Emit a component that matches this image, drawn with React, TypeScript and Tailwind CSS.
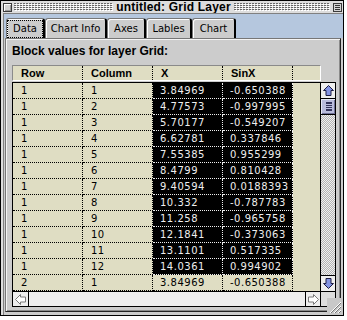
import React from "react";

const ROWS: [string, string, string, string][] = [
  ["1", "1", "3.84969", "-0.650388"],
  ["1", "2", "4.77573", "-0.997995"],
  ["1", "3", "5.70177", "-0.549207"],
  ["1", "4", "6.62781", "0.337846"],
  ["1", "5", "7.55385", "0.955299"],
  ["1", "6", "8.4799", "0.810428"],
  ["1", "7", "9.40594", "0.0188393"],
  ["1", "8", "10.332", "-0.787783"],
  ["1", "9", "11.258", "-0.965758"],
  ["1", "10", "12.1841", "-0.373063"],
  ["1", "11", "13.1101", "0.517335"],
  ["1", "12", "14.0361", "0.994902"],
  ["2", "1", "3.84969", "-0.650388"],
];

const TABS = [
  { label: "Data", w: "w-[39px]" },
  { label: "Chart Info", w: "w-[62px]" },
  { label: "Axes", w: "w-[39px]" },
  { label: "Lables", w: "w-[46px]" },
  { label: "Chart", w: "w-[44px]" },
];

// title bar grooves, drawn as dotted rows
function Stripes({ width }: { width: number }) {
  const dots: React.ReactNode[] = [];
  for (let row = 0; row < 4; row++) {
    for (let x = 0; x < width - 1; x += 3) {
      dots.push(<rect key={`d${row}-${x}`} x={x} y={row * 2} width="2" height="1" fill="#666666" />);
      dots.push(<rect key={`l${row}-${x}`} x={x + 1} y={row * 2 + 1} width="2" height="1" fill="#ffffff" />);
    }
  }
  return (
    <svg width={width} height="8" viewBox={`0 0 ${width} 8`} className="block shrink-0" shapeRendering="crispEdges">
      {dots}
    </svg>
  );
}

function Arrow({ dir, active }: { dir: "up" | "down" | "left" | "right"; active?: boolean }) {
  const rot = { up: 0, right: 90, down: 180, left: 270 }[dir];
  return (
    <svg width="13" height="13" viewBox="0 0 13 13">
      <polygon
        transform={`rotate(${rot} 6.5 6.5)`}
        points="6.5,1.5 11.5,6.5 9,6.5 9,11.5 4,11.5 4,6.5 1.5,6.5"
        fill={active ? "#8393e2" : "#ffffff"}
        stroke={active ? "#1c1c44" : "#7a7a7a"}
        strokeWidth="1"
        strokeLinejoin="miter"
      />
    </svg>
  );
}

function GrowBox() {
  return (
    <svg className="absolute left-[326px] top-[297px]" width="16" height="17" viewBox="0 0 16 17">
      <rect x="0" y="0" width="16" height="17" fill="#c8c8c8" />
      {[0, 4, 8].map((o) => (
        <g key={o}>
          <line x1={3 + o} y1={15} x2={14} y2={4 + o} stroke="#ffffff" strokeWidth="1" />
          <line x1={4 + o} y1={15} x2={14} y2={5 + o} stroke="#777777" strokeWidth="1" />
        </g>
      ))}
    </svg>
  );
}

export default function App() {
  return (
    <div className="h-[320px] w-[347px] bg-white">
      <div className="relative flex h-[316px] w-[344px] flex-col border border-black bg-[#dddddd]">
        {/* title bar */}
        <div className="flex h-[12px] shrink-0 items-center pl-[2px]">
          <div className="h-[9px] w-[9px] shrink-0 border border-[#3a3a3a] bg-[#d4d4d4] shadow-[inset_1px_1px_0_#fff,inset_-1px_-1px_0_#999]" />
          <div className="ml-[2px]">
            <Stripes width={99} />
          </div>
          <div className="w-[121px] shrink-0 text-center font-['Liberation_Sans',sans-serif] text-[12px] font-bold leading-[12px] tracking-[0.2px] text-black">
            untitled: Grid Layer
          </div>
          <Stripes width={96} />
          <div className="ml-[3px] flex h-[9px] w-[9px] shrink-0 flex-col justify-center gap-[1px] border border-[#3a3a3a] bg-[#d4d4d4] px-[1px]">
            <div className="h-px bg-[#333]" />
            <div className="h-px bg-[#333]" />
            <div className="h-px bg-[#333]" />
          </div>
        </div>

        {/* content */}
        <div className="flex flex-1 pl-[2px]">
          <div className="flex flex-1 flex-col border-l border-t border-[#808080] bg-[#cccccc] pb-[3px]">
            {/* tab strip */}
            <div className="flex h-[24px] items-end bg-[#b5c7de] pl-[2px]">
              {TABS.map((t, i) => (
                <div
                  key={t.label}
                  className={`${t.w} flex h-[20px] items-center justify-center rounded-t-[3px] border-l border-t border-r-2 border-l-[#777] border-t-[#777] border-r-black bg-[#cccccc] font-['DejaVu_Sans',sans-serif] text-[10px] leading-none text-black shadow-[inset_1px_1px_0_#fff]`}
                >
                  {i === 0 ? (
                    <span className="flex h-[18px] w-full items-center justify-center border border-dotted border-black">
                      {t.label}
                    </span>
                  ) : (
                    t.label
                  )}
                </div>
              ))}
            </div>

            {/* panel */}
            <div className="ml-[1px] mr-[2px] flex h-[274px] flex-col border-l border-t border-r border-b border-l-[#777] border-t-[#777] border-r-[#222] border-b-[#222] bg-[#cccccc] pl-[6px] shadow-[inset_1px_1px_0_#f4f4f4,inset_-1px_-1px_0_#8a8a8a]">
              <div className="mt-[5px] h-[14px] font-['Liberation_Sans',sans-serif] text-[12px] font-bold leading-[14px] text-black">
                Block values for layer Grid:
              </div>

              {/* column header */}
              <div className="mt-[7px] flex h-[16px] w-[309px] border-l border-t border-r border-b border-l-[#8a8a8a] border-t-[#8a8a8a] border-r-white border-b-white bg-[#dfddc3] font-['Liberation_Sans',sans-serif] text-[11px] font-bold text-black">
                {["Row", "Column", "X", "SinX"].map((h) => (
                  <div key={h} className="flex w-[70px] items-center border-r border-dotted border-black pl-[8px]">
                    {h}
                  </div>
                ))}
              </div>

              {/* table body */}
              <div className="mt-[1px] flex h-[225px] w-[324px] flex-col border border-black bg-[#dfddc3]">
                <div className="flex flex-1">
                  <div className="flex w-[307px] flex-col font-['DejaVu_Sans',sans-serif] text-[10px] tracking-[0.5px]">
                    {ROWS.map((r, ri) => {
                      const sel = ri < 12;
                      return (
                        <div key={ri} className="flex h-[16px]">
                          <div className="flex w-[70px] items-center border-b border-r border-dotted border-black pl-[8px] text-black">
                            {r[0]}
                          </div>
                          <div className="flex w-[70px] items-center border-b border-r border-dotted border-black pl-[8px] text-black">
                            {r[1]}
                          </div>
                          {[r[2], r[3]].map((v, ci) => (
                            <div
                              key={ci}
                              className={
                                sel
                                  ? "flex w-[70px] items-center border-b border-r border-dotted border-[#eeeeee] bg-black pl-[7px] text-[#eeeeee]"
                                  : "flex w-[70px] items-center border-b border-r border-dotted border-black pl-[7px] text-black"
                              }
                            >
                              {v}
                            </div>
                          ))}
                        </div>
                      );
                    })}
                  </div>
                  <div className="flex-1" />
                  {/* vertical scroll bar */}
                  <div className="flex w-[15px] flex-col border-l border-black">
                    <div className="flex h-[16px] items-center justify-center border-b border-black bg-[#eeeeee]">
                      <Arrow dir="up" active />
                    </div>
                    <div className="flex h-[16px] items-center justify-end border-b border-black bg-[#b9bcdc] pr-[3px] shadow-[inset_1px_1px_0_#e4e6f6,inset_-1px_-1px_0_#6e7096]">
                      <div className="flex h-[10px] w-[6px] flex-col justify-between">
                        {[0, 1, 2, 3, 4, 5].map((i) => (
                          <div key={i} className="h-px bg-[#33335a]" />
                        ))}
                      </div>
                    </div>
                    <div className="flex-1 bg-[repeating-conic-gradient(#b4b4b4_0_25%,#f0f0f0_0_50%)] bg-[length:2px_2px]" />
                    <div className="flex h-[16px] items-center justify-center border-t border-black bg-[#eeeeee]">
                      <Arrow dir="down" active />
                    </div>
                  </div>
                </div>

                {/* horizontal scroll bar */}
                <div className="flex h-[15px] border-t border-black">
                  <div className="flex w-[16px] items-center justify-center border-r border-black bg-[#eeeeee]">
                    <Arrow dir="left" />
                  </div>
                  <div className="flex-1 bg-[#eeeeee]" />
                  <div className="flex w-[15px] items-center justify-center border-l border-black bg-[#eeeeee]">
                    <Arrow dir="right" />
                  </div>
                  <div className="w-[15px] border-l border-black bg-[#dddddd]" />
                </div>
              </div>
            </div>
          </div>
        </div>

        <GrowBox />
      </div>
    </div>
  );
}
